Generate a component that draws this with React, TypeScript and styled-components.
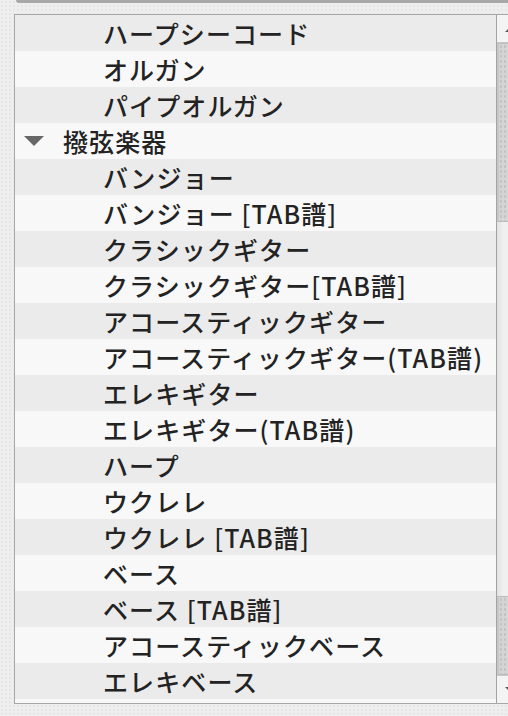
import React from 'react'
import styled, { createGlobalStyle } from 'styled-components'

const GlobalStyle = createGlobalStyle`
  html, body {
    margin: 0;
    padding: 0;
    overflow: hidden;
  }
  body {
    background-color: #eeeeee;
    background-image: radial-gradient(rgba(0, 0, 0, 0.035) 1px, transparent 1px);
    background-size: 4px 4px;
    font-family: "Noto Sans CJK JP", "Noto Sans", sans-serif;
  }
`

type Item = { label: string; level: 0 | 1 }

const items: Item[] = [
  { label: 'ハープシーコード', level: 1 },
  { label: 'オルガン', level: 1 },
  { label: 'パイプオルガン', level: 1 },
  { label: '撥弦楽器', level: 0 },
  { label: 'バンジョー', level: 1 },
  { label: 'バンジョー [TAB譜]', level: 1 },
  { label: 'クラシックギター', level: 1 },
  { label: 'クラシックギター[TAB譜]', level: 1 },
  { label: 'アコースティックギター', level: 1 },
  { label: 'アコースティックギター(TAB譜)', level: 1 },
  { label: 'エレキギター', level: 1 },
  { label: 'エレキギター(TAB譜)', level: 1 },
  { label: 'ハープ', level: 1 },
  { label: 'ウクレレ', level: 1 },
  { label: 'ウクレレ [TAB譜]', level: 1 },
  { label: 'ベース', level: 1 },
  { label: 'ベース [TAB譜]', level: 1 },
  { label: 'アコースティックベース', level: 1 },
  { label: 'エレキベース', level: 1 },
]

const Page = styled.div`
  width: 508px;
  height: 716px;
  display: flex;
  flex-direction: column;
`

const TopEdge = styled.div`
  height: 3px;
  margin-left: 16px;
  background: #a8a8a8;
  border-bottom-left-radius: 3px;
`

const ListBox = styled.div`
  margin: 11px 0 0 14px;
  width: 506px;
  display: flex;
  border: 1px solid #a7a7a7;
  background: #f8f8f8;
`

const Rows = styled.div`
  width: 481px;
  display: flex;
  flex-direction: column;
`

const Row = styled.div<{ $striped: boolean; $level: number }>`
  height: 36px;
  display: flex;
  align-items: center;
  padding-left: ${(p) => (p.$level === 0 ? 8 : 88)}px;
  background: ${(p) => (p.$striped ? '#ebebeb' : '#f8f8f8')};
  color: #232323;
  font-size: 25px;
  font-weight: 500;
  letter-spacing: 1.1px;
  white-space: nowrap;
`

const Disclosure = styled.svg`
  width: 22px;
  height: 12px;
  margin-right: 18px;
  flex: none;
`

const Scrollbar = styled.div`
  width: 14px;
  border-left: 1px solid #a3a3a3;
  display: flex;
  flex-direction: column;
  background: #f3f3f3;
`

const ArrowCell = styled.div<{ $h: number; $down?: boolean }>`
  height: ${(p) => p.$h}px;
  display: flex;
  align-items: center;
  justify-content: flex-end;
  background: #f4f4f4;
  border-${(p) => (p.$down ? 'top' : 'bottom')}: 1px solid #c8c8c8;
`

const Trough = styled.div<{ $h: number }>`
  height: ${(p) => p.$h}px;
  background-color: #d5d5d5;
  background-image: radial-gradient(rgba(0, 0, 0, 0.08) 1px, transparent 1px);
  background-size: 4px 5px;
  border-left: 2px solid #c6c6c6;
  border-top: 1px solid #bdbdbd;
  border-bottom: 1px solid #bdbdbd;
`

const Thumb = styled.div<{ $h: number }>`
  height: ${(p) => p.$h}px;
  background: linear-gradient(90deg, #e2e2e2 0%, #efefef 40%, #f2f2f2 100%);
`

export default function App() {
  return (
    <>
      <GlobalStyle />
      <Page>
        <TopEdge />
        <ListBox>
          <Rows>
            {items.map((it, i) => (
              <Row key={i} $striped={i % 2 === 0} $level={it.level}>
                {it.level === 0 && (
                  <Disclosure viewBox="0 0 22 12">
                    <polygon points="1,1 21,1 11,11" fill="#676767" />
                  </Disclosure>
                )}
                {it.label}
              </Row>
            ))}
          </Rows>
          <Scrollbar>
            <ArrowCell $h={27}>
              <svg width="6" height="8" viewBox="0 0 6 8">
                <polygon points="6,1 6,7 0,7" fill="#5a5a5a" />
              </svg>
            </ArrowCell>
            <Trough $h={177} />
            <Thumb $h={374} />
            <Trough $h={77} />
            <ArrowCell $h={27} $down>
              <svg width="6" height="8" viewBox="0 0 6 8">
                <polygon points="0,1 6,1 6,7" fill="#5a5a5a" />
              </svg>
            </ArrowCell>
          </Scrollbar>
        </ListBox>
      </Page>
    </>
  )
}
